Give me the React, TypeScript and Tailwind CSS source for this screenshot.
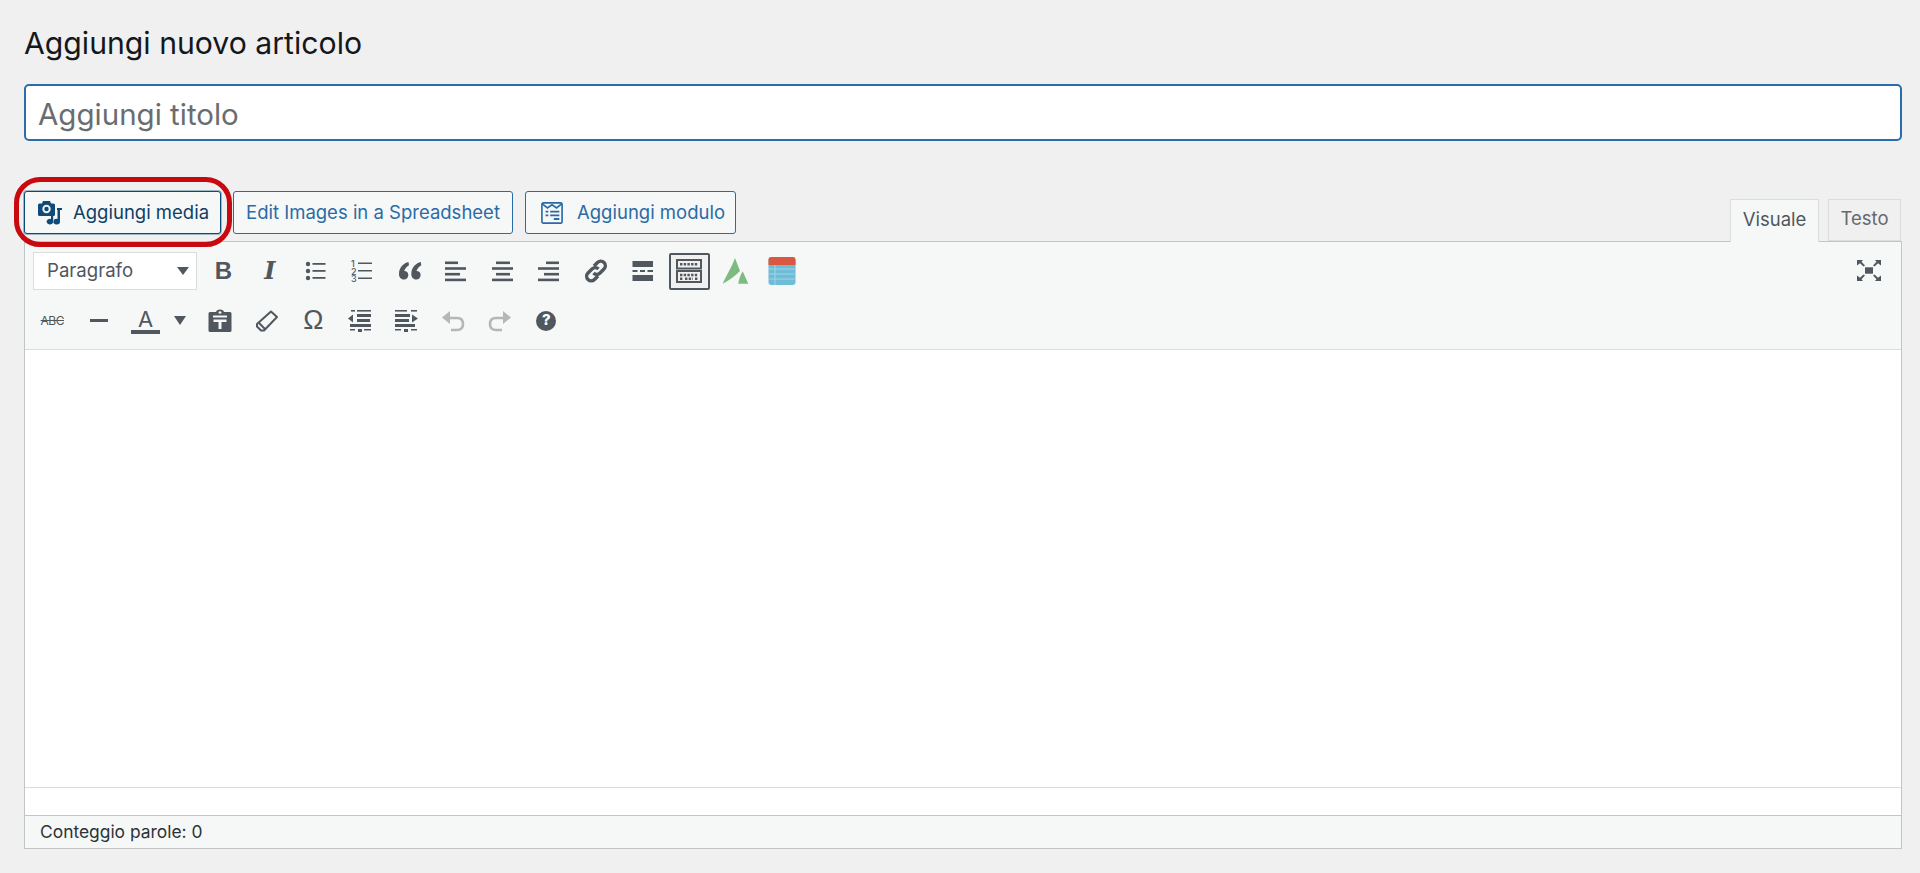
import type { ReactNode } from 'react';

const INK = '#50575e';

function Tool({ children, w = 'w-[46.6px]' }: { children: ReactNode; w?: string }) {
  return <div className={`flex h-[37px] shrink-0 items-center justify-center text-[#50575e] ${w}`}>{children}</div>;
}

function Icon({ children, size = 24 }: { children: ReactNode; size?: number }) {
  return (
    <svg width={size} height={size} viewBox="0 0 24 24" fill={INK} aria-hidden="true">
      {children}
    </svg>
  );
}

function Bars({ rows }: { rows: [number, number][] }) {
  return (
    <Icon>
      {rows.map(([x, w], i) => (
        <rect key={i} x={x} y={2.5 + i * 5.7} width={w} height={2.6} />
      ))}
    </Icon>
  );
}

function MediaIcon() {
  return (
    <svg width="24" height="24" viewBox="0 0 24 24" aria-hidden="true" fill="#0f4a78">
      <path d="M0 4q0-1.500 1.500-1.500H4L5 0h7l1 2.500h2.500Q17 2.500 17 4v9.500q0 1.500-1.500 1.500h-14Q0 15 0 13.500Z" />
      <circle cx="8.500" cy="8" r="4.200" fill="#f0f0f1" />
      <circle cx="8.500" cy="8" r="2.200" />
      <path d="M13 14.500h2.200v6a3.300 2.800 0 1 1-2.200-2.500Z" />
      <path d="M19 7h5v2h-2v11.500a3.300 2.800 0 1 1-2.500-2.600V9h-.5Z" />
    </svg>
  );
}

function FormIcon() {
  return (
    <svg width="22" height="22" viewBox="0 0 24 24" aria-hidden="true" fill="none" stroke="#2a6ba6" strokeWidth="1.800">
      <rect x="1" y="1" width="22" height="22" rx="1.500" />
      <path d="M1.500 2l5.500 4.500L12 3l5 3.500L22.500 2" />
      <path d="M5 10.500h3M10 10.500h10M5 14.500h3M10 14.500h10M14 18.500h6" strokeWidth="2" />
    </svg>
  );
}

function KitchenIcon() {
  return (
    <svg width="26" height="24" viewBox="0 0 26 24" aria-hidden="true" fill="none" stroke={INK} strokeWidth="2">
      <rect x="1" y="1" width="24" height="8.500" />
      <rect x="1" y="12" width="24" height="11" />
      <path d="M4 5.200h18M4 16h18M4 19.800h3M9 19.800h8M19 19.800h3" strokeDasharray="2.400 1.300" strokeWidth="2.400" />
    </svg>
  );
}

function TableIcon() {
  return (
    <svg width="28" height="30" viewBox="0 0 28 30" aria-hidden="true">
      <rect x="0.500" y="1" width="27" height="28" rx="3" fill="#6dbcd8" />
      <path d="M0.500 4q0-3 3-3h21q3 0 3 3v5h-27Z" fill="#d9583f" />
      <path d="M0.500 13h27M0.500 18h27M0.500 23h27M7 9v20" stroke="#a4d5e6" strokeWidth="1" />
    </svg>
  );
}

export default function App() {
  return (
    <div className="relative h-[873px] overflow-hidden bg-[#f0f0f1] pr-[18px] pl-[24px] font-['Inter',sans-serif] text-[#1d2327]">
      <h1 className="pt-[24px] text-[30.2px] leading-[38px] font-normal text-[#14181c]">Aggiungi nuovo articolo</h1>

      <div className="mt-[22px] flex h-[57px] items-center rounded-[5px] border-2 border-[#2b6cab] bg-white pt-[3px] pl-[12px] text-[29.5px] text-[#6a6d70]">
        Aggiungi titolo
      </div>

      <div className="mt-[50px] flex items-end justify-between">
        <div className="flex gap-[12px] pb-[7px] text-[18.5px]">
          <div className="relative flex h-[43px] w-[197px] items-center gap-[11px] rounded-[3px] border border-[#0a4b78] bg-[#f6f7f7] pl-[13px] text-[#0f3f66] shadow-[0_0_0_1px_rgba(10,75,120,0.35)]">
            <MediaIcon />
            <span>Aggiungi media</span>
            <div className="absolute top-[-15px] left-[-11px] z-10 h-[70px] w-[218px] rounded-[26px] border-[5px] border-[#c8090f]" />
          </div>
          <div className="flex h-[43px] w-[280px] items-center justify-center rounded-[3px] border border-[#2a6ba6] bg-[#f6f7f7] text-[#2a6ba6]">
            Edit Images in a Spreadsheet
          </div>
          <div className="flex h-[43px] w-[211px] items-center gap-[14px] rounded-[3px] border border-[#2a6ba6] bg-[#f6f7f7] pl-[15px] text-[#2a6ba6]">
            <FormIcon />
            <span>Aggiungi modulo</span>
          </div>
        </div>
        <div className="flex items-end gap-[9px] pr-[1px] text-[18.500px]">
          <div className="relative top-[1px] flex h-[43px] w-[89px] items-center justify-center border border-b-0 border-[#dcdcde] bg-[#f6f7f7] pb-[2px] text-[#50575e]">Visuale</div>
          <div className="flex h-[42px] w-[73px] items-center justify-center border border-[#dcdcde] bg-[#f0f0f1] pb-[2px] text-[#646970]">Testo</div>
        </div>
      </div>

      <div className="border border-[#c3c4c7] bg-white">
        <div className="relative h-[108px] border-b border-[#dcdcde] bg-[#f6f7f7] pt-[10px]">
          <div className="flex items-center pl-[8px]">
            <div className="mr-[3px] flex h-[38px] w-[164px] items-center justify-between border border-[#dcdcde] bg-white pr-[6px] pl-[13px] text-[18.600px] text-[#50575e]">
              Paragrafo
              <svg width="14" height="10" viewBox="0 0 14 10" fill={INK} aria-hidden="true"><path d="M1 1h12L7 9Z" /></svg>
            </div>
            <Tool><span className="font-['Liberation_Sans',sans-serif] text-[24px] font-bold">B</span></Tool>
            <Tool><span className="font-['DejaVu_Serif',serif] text-[24px] font-bold italic">I</span></Tool>
            <Tool>
              <Icon>
                <circle cx="4" cy="5" r="2.200" /><circle cx="4" cy="12" r="2.200" /><circle cx="4" cy="19" r="2.200" />
                <rect x="8.500" y="4" width="13" height="1.800" /><rect x="8.500" y="11" width="13" height="1.800" /><rect x="8.500" y="18" width="13" height="1.800" />
              </Icon>
            </Tool>
            <Tool>
              <div className="relative h-[24px] w-[24px]">
                <div className="absolute top-[1px] left-0 flex flex-col text-[9px] leading-[7.500px] font-medium">
                  <span>1</span><span>2</span><span>3</span>
                </div>
                <svg width="24" height="24" viewBox="0 0 24 24" fill={INK} aria-hidden="true">
                  <rect x="7" y="3.500" width="14" height="1.500" /><rect x="7" y="11" width="14" height="1.500" /><rect x="7" y="18.500" width="14" height="1.500" />
                </svg>
              </div>
            </Tool>
            <Tool>
              <Icon>
                <path d="M10.500 3C6 4 1 8 1 15c0 3.200 2 5.500 4.800 5.500s4.500-2 4.500-4.500S8.600 12 6.200 12c1-2.800 2.800-4.800 4.800-5.800Z" />
                <path d="M22.800 3C18.300 4 13.300 8 13.300 15c0 3.200 2 5.500 4.800 5.500s4.500-2 4.500-4.500-1.700-4-4.100-4c1-2.800 2.800-4.800 4.800-5.800Z" />
              </Icon>
            </Tool>
            <Tool><Bars rows={[[1, 13], [1, 21], [1, 15], [1, 21]]} /></Tool>
            <Tool><Bars rows={[[5, 14], [1, 21], [5, 14], [1, 21]]} /></Tool>
            <Tool><Bars rows={[[9, 13], [1, 21], [7, 15], [1, 21]]} /></Tool>
            <Tool>
              <svg width="26" height="26" viewBox="0 0 26 26" fill="none" stroke={INK} strokeWidth="3.400" aria-hidden="true">
                <path d="M11 8l3.500-3.500a4.500 4.500 0 0 1 6.500 6.500l-4 4a4.500 4.500 0 0 1-6.500 0" />
                <path d="M15 18l-3.500 3.500a4.500 4.500 0 0 1-6.500-6.500l4-4a4.500 4.500 0 0 1 6.500 0" />
              </svg>
            </Tool>
            <Tool>
              <Icon>
                <rect x="1.500" y="2" width="20.500" height="6" />
                <rect x="1.500" y="11" width="5" height="2" /><rect x="9" y="11" width="5" height="2" /><rect x="16.500" y="11" width="5.500" height="2" />
                <rect x="1.500" y="16" width="20.500" height="6" />
              </Icon>
            </Tool>
            <Tool>
              <div className="flex h-[37px] w-[41px] items-center justify-center rounded-[2px] border-2 border-[#50575e] bg-[#f0f0f1]">
                <KitchenIcon />
              </div>
            </Tool>
            <Tool>
              <svg width="28" height="28" viewBox="0 0 28 28" fill="#7dbb80" aria-hidden="true">
                <path d="M13 1l5 13C14 18 8 23 .7 26.700 4 19 10 10 13 1Z" />
                <path d="M20.700 14.300l5.600 12.400h-10c.5-4 2-8.500 4.400-12.400Z" />
              </svg>
            </Tool>
            <Tool><TableIcon /></Tool>
          </div>

          <div className="mt-[12px] flex items-center pl-[4px]">
            <Tool><span className="text-[12px] tracking-[-0.5px] line-through">ABC</span></Tool>
            <Tool><div className="h-[3px] w-[18px] bg-[#50575e]" /></Tool>
            <Tool>
              <div className="flex flex-col items-center">
                <span className="text-[22px] leading-[22px]">A</span>
                <div className="h-[4px] w-[29px] bg-[#50575e]" />
              </div>
            </Tool>
            <Tool w="w-[22px] mr-[6px]">
              <svg width="12" height="9" viewBox="0 0 12 9" fill={INK} aria-hidden="true"><path d="M0 0h12L6 9Z" /></svg>
            </Tool>
            <Tool>
              <Icon>
                <path fillRule="evenodd" d="M0.500 4.500q0-1.500 1.500-1.500H8q.5-2.500 4-2.500T16 3h6q1.500 0 1.500 1.500v17q0 1.500-1.500 1.500H2q-1.500 0-1.500-1.500ZM10.500 3.500a1.500 1.300 0 0 0 3 0 1.500 1.300 0 0 0-3 0ZM5 6.500v2h14v-2ZM5.500 10.500V13H10.500v7h3v-7H18.500v-2.500Z" />
              </Icon>
            </Tool>
            <Tool>
              <svg width="24" height="24" viewBox="0 0 24 24" fill="none" stroke={INK} strokeWidth="2" aria-hidden="true">
                <path d="M16 2.500L22 8 9 21.500H6L2 17.500V15Z" strokeLinejoin="round" />
                <path d="M4 14l6 6" />
              </svg>
            </Tool>
            <Tool><span className="font-['Liberation_Sans',sans-serif] text-[27px] leading-none">Ω</span></Tool>
            <Tool>
              <Icon>
                <rect x="3" y="1" width="4" height="1.600" /><rect x="9" y="1" width="14" height="1.600" /><rect x="9" y="5" width="14" height="3" /><rect x="9" y="10" width="13" height="3" />
                <rect x="2" y="15" width="21" height="3" /><rect x="2" y="20" width="5" height="1.500" /><rect x="16" y="20" width="7" height="1.500" />
                <rect x="10" y="20" width="4" height="3" /><path d="M0 9.500L5 5.500v8Z" />
              </Icon>
            </Tool>
            <Tool>
              <Icon>
                <rect x="1" y="1" width="12" height="1.600" /><rect x="17" y="1" width="6" height="1.600" /><rect x="1" y="5" width="15" height="3" /><rect x="1" y="10" width="14" height="3" />
                <rect x="1" y="15" width="20" height="3" /><rect x="1" y="20" width="6" height="1.500" /><rect x="17" y="20" width="6" height="1.500" />
                <rect x="10" y="20" width="4" height="3" /><path d="M24 9.500L18 5.500v8Z" />
              </Icon>
            </Tool>
            <Tool>
              <svg width="24" height="24" viewBox="0 0 24 24" fill="none" stroke="#b4b7b9" strokeWidth="2.600" aria-hidden="true">
                <path d="M7 9h9q6 0 6 6t-6 6h-6" />
                <path d="M1 8.500L9 2v13Z" fill="#b4b7b9" stroke="none" />
              </svg>
            </Tool>
            <Tool>
              <svg width="24" height="24" viewBox="0 0 24 24" fill="none" stroke="#b4b7b9" strokeWidth="2.600" aria-hidden="true">
                <path d="M17 9H8q-6 0-6 6t6 6h6" />
                <path d="M23 8.500L15 2v13Z" fill="#b4b7b9" stroke="none" />
              </svg>
            </Tool>
            <Tool>
              <div className="flex h-[20px] w-[20px] items-center justify-center rounded-full bg-[#50575e] text-[15px] font-extrabold text-white">?</div>
            </Tool>
          </div>

          <div className="absolute top-[18px] right-[20px]">
            <svg width="24" height="21" viewBox="0 0 24 23" preserveAspectRatio="none" fill={INK} aria-hidden="true">
              <rect x="8" y="8" width="8" height="7" />
              <path d="M0 0h6L4.500 2 8 6 6.500 7 3 3.500 0 6ZM24 0h-6l1.500 2L16 6l1.500 1 3.500-3.500L24 6ZM0 23h6l-1.500-2L8 17l-1.500-1L3 19.500 0 17ZM24 23h-6l1.500-2-3.500-4 1.500-1 3.500 3.500L24 17Z" />
            </svg>
          </div>
        </div>

        <div className="h-[438px] border-b border-[#dcdcde]" />
        <div className="h-[28px] border-b border-[#c3c4c7]" />
        <div className="flex h-[32px] items-center bg-[#f6f7f7] pl-[15px] text-[17.400px] text-[#2c3338]">Conteggio parole: 0</div>
      </div>
    </div>
  );
}
